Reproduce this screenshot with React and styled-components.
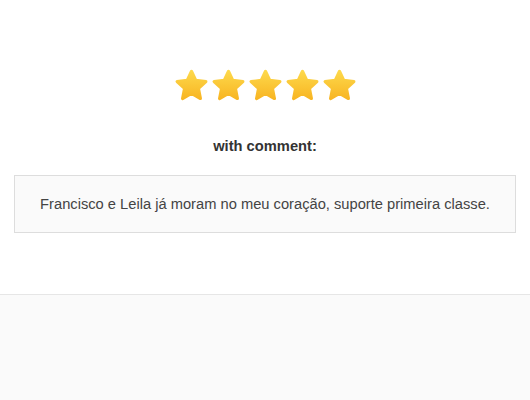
import styled, { createGlobalStyle } from "styled-components";

const GlobalStyle = createGlobalStyle`
  html, body {
    margin: 0;
    padding: 0;
    background: #ffffff;
    font-family: "Liberation Sans", Arial, sans-serif;
  }
`;

const Page = styled.div`
  height: 400px;
  display: flex;
  flex-direction: column;
`;

const Content = styled.div`
  height: 294px;
  box-sizing: border-box;
  padding: 69px 14px 0;
  display: flex;
  flex-direction: column;
  align-items: center;
`;

const Stars = styled.div`
  display: flex;
  gap: 2px;
  height: 34px;
`;

const Label = styled.div`
  margin-top: 35px;
  font-size: 14.7px;
  font-weight: 700;
  color: #333333;
  line-height: 17px;
`;

const CommentBox = styled.div`
  margin-top: 20px;
  align-self: stretch;
  height: 58px;
  box-sizing: border-box;
  border: 1px solid #dddddd;
  background: #fafafa;
  display: flex;
  align-items: center;
  justify-content: center;
  font-size: 14.7px;
  color: #444444;
`;

const Footer = styled.div`
  flex: 1;
  border-top: 1px solid #e6e6e6;
  background: #fafafa;
`;

const Star = () => (
  <svg width="35" height="34" viewBox="0 0 34 33">
    <defs>
      <linearGradient id="starGrad" x1="0" y1="0" x2="0" y2="1">
        <stop offset="0" stopColor="#fdd84a" />
        <stop offset="1" stopColor="#f8b624" />
      </linearGradient>
    </defs>
    <path
      d="M17 2.2 L21.2 11 L31 12.2 L23.8 18.9 L25.7 28.7 L17 23.8 L8.3 28.7 L10.2 18.9 L3 12.2 L12.8 11 Z"
      fill="url(#starGrad)"
      stroke="url(#starGrad)"
      strokeWidth="3"
      strokeLinejoin="round"
    />
  </svg>
);

export default function App() {
  return (
    <Page>
      <GlobalStyle />
      <Content>
        <Stars>
          {[0, 1, 2, 3, 4].map((i) => (
            <Star key={i} />
          ))}
        </Stars>
        <Label>with comment:</Label>
        <CommentBox>
          Francisco e Leila já moram no meu coração, suporte primeira classe.
        </CommentBox>
      </Content>
      <Footer />
    </Page>
  );
}
